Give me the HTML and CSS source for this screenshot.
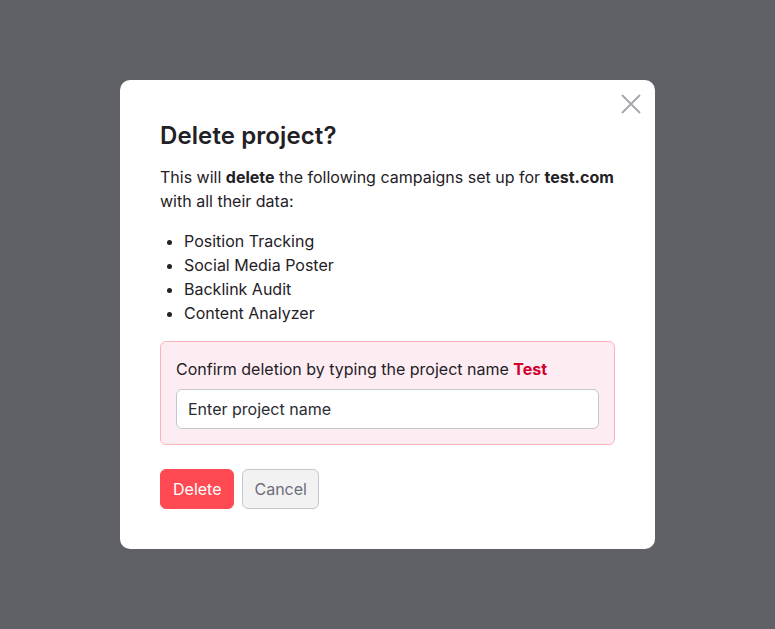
FILE: index.html
```html
<!DOCTYPE html>
<html lang="en">
<head>
<meta charset="utf-8">
<title>Delete project</title>
<link rel="stylesheet" href="styles.css">
</head>
<body>
<div class="overlay">
  <div class="modal">
    <button class="close" aria-label="Close">
      <svg width="20" height="20" viewBox="0 0 20 20"><path d="M1 1L19 19M19 1L1 19" stroke="#a4a6ac" stroke-width="1.8" fill="none"/></svg>
    </button>
    <h2 class="title">Delete project?</h2>
    <p class="text">This will <b>delete</b> the following campaigns set up for <b>test.com</b> with all their data:</p>
    <ul class="list">
      <li>Position Tracking</li>
      <li>Social Media Poster</li>
      <li>Backlink Audit</li>
      <li>Content Analyzer</li>
    </ul>
    <div class="confirm">
      <div class="confirm-label">Confirm deletion by typing the project name <span class="name">Test</span></div>
      <input class="input" type="text" placeholder="Enter project name">
    </div>
    <div class="actions">
      <button class="btn btn-danger">Delete</button>
      <button class="btn btn-secondary">Cancel</button>
    </div>
  </div>
</div>
</body>
</html>
```
FILE: styles.css
```css
* { box-sizing: border-box; }
html, body { margin: 0; padding: 0; }
body {
  font-family: Inter, "Noto Sans", sans-serif;
  color: #1f2126;
  background: #606166;
  width: 775px;
  height: 629px;
  overflow: hidden;
}
.overlay {
  height: 629px;
  display: flex;
  justify-content: center;
  padding-top: 80px;
}
.modal {
  position: relative;
  width: 535px;
  height: 469px;
  background: #fff;
  border-radius: 10px;
  padding: 40px;
}
.close {
  position: absolute;
  top: 14px;
  right: 14px;
  width: 20px;
  height: 20px;
  padding: 0;
  border: 0;
  background: none;
  display: flex;
}
.title {
  margin: 0 0 13px;
  font-size: 24px;
  line-height: 32px;
  font-weight: 600;
  letter-spacing: 0.1px;
  color: #1f2126;
}
.text {
  margin: 0 0 16px;
  font-size: 16px;
  line-height: 24px;
}
.text b { font-weight: 700; }
.list {
  margin: 0 0 16px;
  padding-left: 24px;
  font-size: 16px;
  line-height: 24px;
}
.confirm {
  background: #fdedf3;
  border: 1px solid #ffb2bb;
  border-radius: 6px;
  padding: 15px;
  display: flex;
  flex-direction: column;
  gap: 8px;
}
.confirm-label {
  font-size: 16px;
  line-height: 24px;
}
.name { color: #d1002f; font-weight: 700; }
.input {
  height: 40px;
  border: 1px solid #c4c7cf;
  border-radius: 6px;
  background: #fff;
  padding: 0 11px;
  font-family: inherit;
  font-size: 16px;
  color: #1f2126;
  outline: none;
}
.input::placeholder { color: #2a2c33; }
.actions {
  margin-top: 24px;
  display: flex;
  gap: 8px;
}
.btn {
  height: 40px;
  padding: 0 11px;
  border-radius: 6px;
  font-family: inherit;
  font-size: 16px;
  line-height: 24px;
  cursor: pointer;
}
.btn-danger {
  background: #ff4953;
  border: 1px solid #ff4953;
  color: #fff;
  padding: 0 12px;
}
.btn-secondary {
  background: #f2f2f3;
  border: 1px solid #c4c7cf;
  color: #6c6e79;
}
```
